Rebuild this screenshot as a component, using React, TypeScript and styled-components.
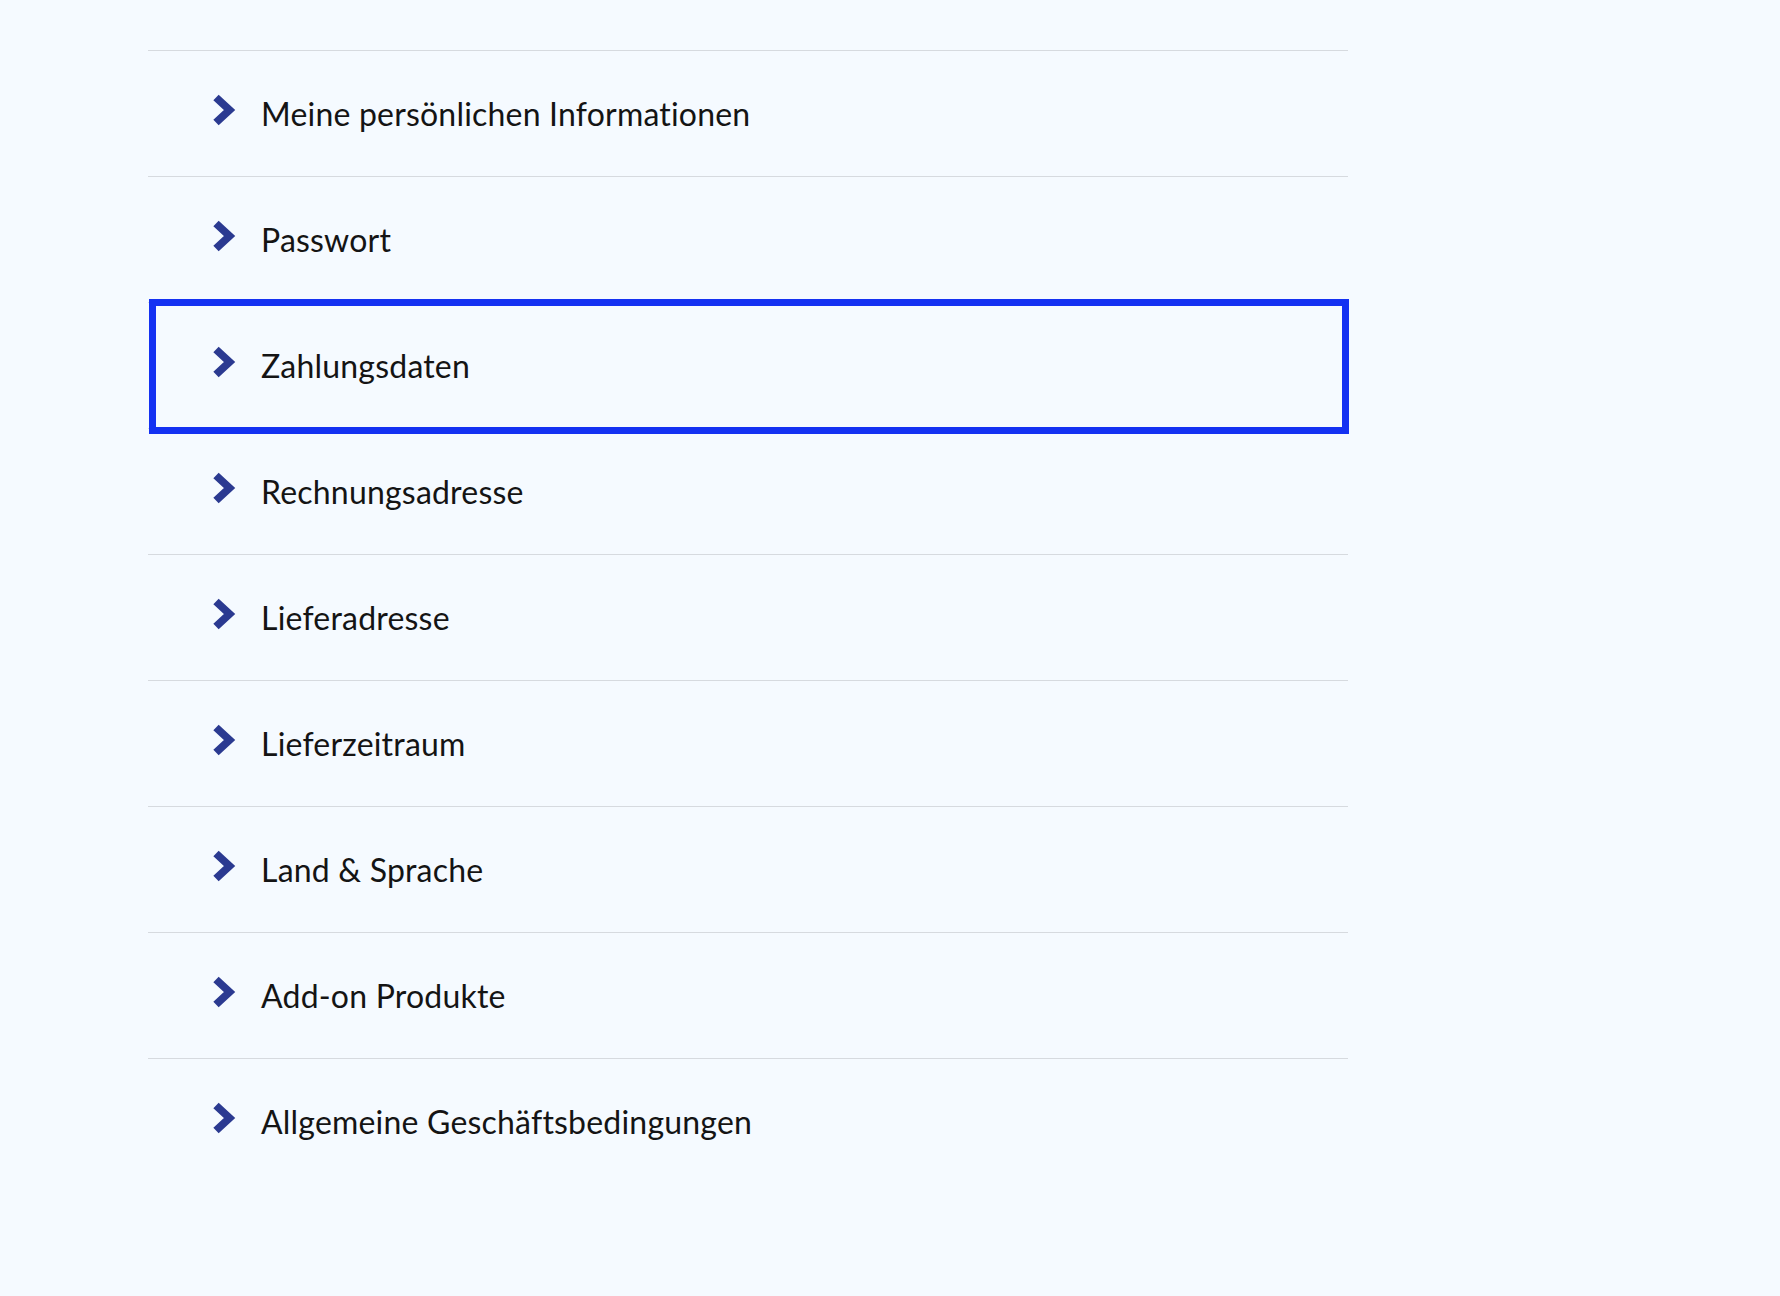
import React from "react";
import styled, { createGlobalStyle } from "styled-components";

const GlobalStyle = createGlobalStyle`
  html, body {
    margin: 0;
    padding: 0;
    background: #f5faff;
  }
  body {
    font-family: Lato, "Noto Sans", "Liberation Sans", sans-serif;
    color: #141414;
  }
`;

const Page = styled.div`
  min-height: 1296px;
  background: #f5faff;
  padding: 50px 0 0 148px;
  box-sizing: border-box;
`;

const List = styled.ul`
  list-style: none;
  margin: 0;
  padding: 0;
  width: 1200px;
`;

const Row = styled.li<{ $focused?: boolean }>`
  position: relative;
  z-index: ${(p) => (p.$focused ? 1 : "auto")};
  display: flex;
  align-items: center;
  height: 126px;
  box-sizing: border-box;
  border-top: 1px solid #d6dadf;
  padding-left: 65px;
  gap: 25px;
  cursor: pointer;

  &::after {
    content: "";
    display: ${(p) => (p.$focused ? "block" : "none")};
    position: absolute;
    top: -4px;
    bottom: -6px;
    left: 1px;
    right: -1px;
    border: 7px solid #1431f2;
    pointer-events: none;
  }
`;

const Icon = styled.svg`
  width: 23px;
  height: 32px;
  flex: none;
  margin-bottom: 8px;
`;

const Label = styled.span`
  font-size: 32px;
  line-height: 40px;
  font-weight: 400;
  color: #141414;
  letter-spacing: 0.2px;
`;

const Chevron = () => (
  <Icon viewBox="0 0 23 32" aria-hidden="true">
    <polyline
      points="3,3.5 16.5,16 3,28.5"
      fill="none"
      stroke="#2b3a91"
      strokeWidth="7.8"
      strokeLinecap="butt"
      strokeLinejoin="miter"
    />
  </Icon>
);

const items = [
  "Meine persönlichen Informationen",
  "Passwort",
  "Zahlungsdaten",
  "Rechnungsadresse",
  "Lieferadresse",
  "Lieferzeitraum",
  "Land & Sprache",
  "Add-on Produkte",
  "Allgemeine Geschäftsbedingungen",
];

export default function App() {
  return (
    <>
      <GlobalStyle />
      <Page>
        <List>
          {items.map((label, i) => (
            <Row key={label} $focused={i === 2}>
              <Chevron />
              <Label>{label}</Label>
            </Row>
          ))}
        </List>
      </Page>
    </>
  );
}
